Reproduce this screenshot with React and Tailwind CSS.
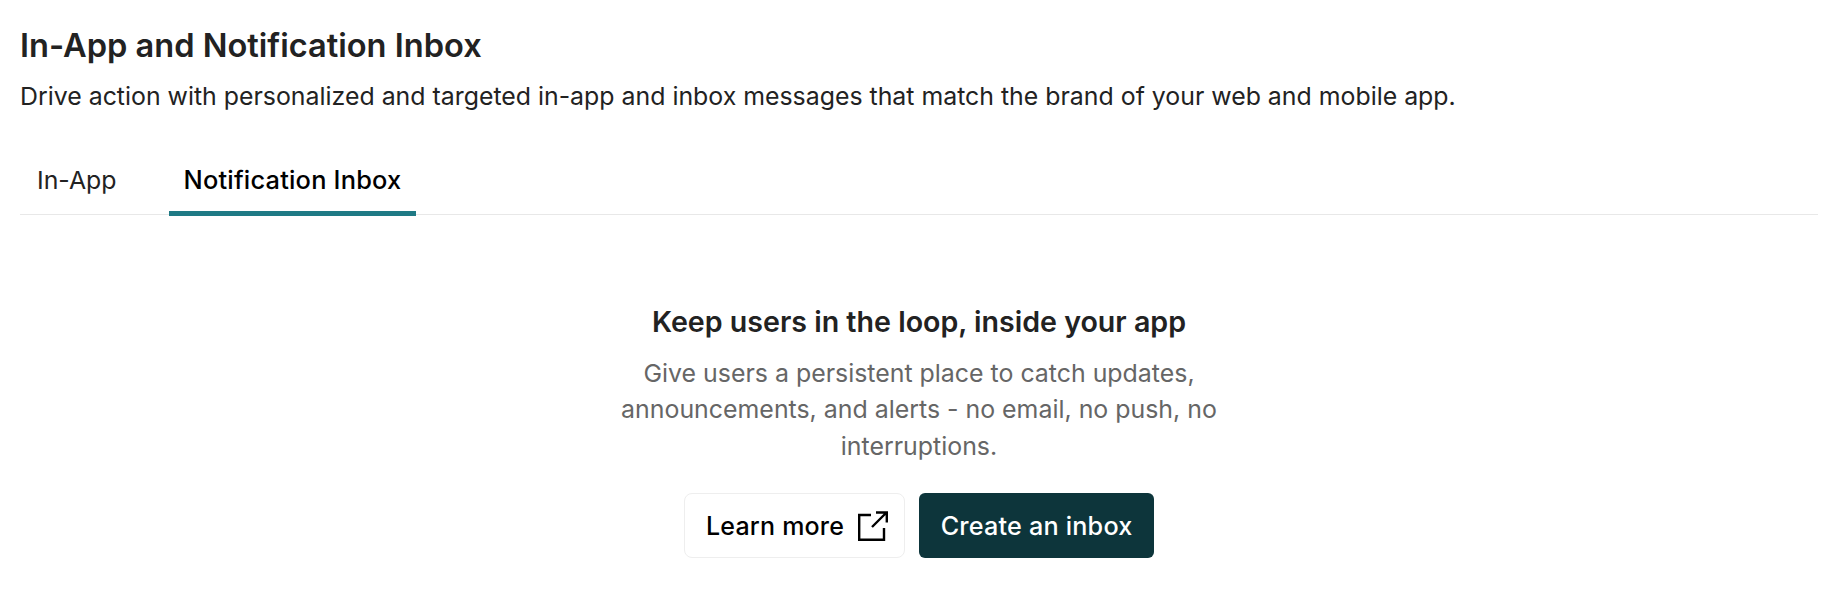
export default function App() {
  return (
    <div className="w-[1842px] h-[606px] bg-white overflow-hidden font-['Inter',sans-serif] text-[#222222] pl-5 pr-[24px] pt-[25px]">
      <h1 className="text-[32.6px] leading-[40px] font-semibold">In-App and Notification Inbox</h1>
      <p className="mt-[11px] text-[24.87px] leading-[40px]">Drive action with personalized and targeted in-app and inbox messages that match the brand of your web and mobile app.</p>
      <div className="mt-[34px] flex gap-[37px] border-b border-[#e8e8e8] h-[65px]">
        <button className="pl-[17px] pr-[15px] pb-[4px] h-[65px] text-[24.87px] text-[#222222]">In-App</button>
        <button className="px-[15px] h-[66px] text-[25.4px] font-medium tracking-[0.2px] text-black border-b-[5px] border-[#1f7a85]">Notification Inbox</button>
      </div>
      <div className="mt-[87px] flex flex-col items-center">
        <h2 className="text-[28.6px] leading-[40px] font-semibold">Keep users in the loop, inside your app</h2>
        <p className="mt-[13px] w-[620px] text-center text-[24.9px] leading-[36.4px] text-[#666666]">Give users a persistent place to catch updates, announcements, and alerts - no email, no push, no interruptions.</p>
        <div className="mt-[29px] flex gap-[14px]">
          <button className="h-[65px] pl-[21px] pr-[16px] pt-[2px] flex items-center gap-[14px] bg-white border border-[#eeeeee] rounded-[8px] text-[25px] font-medium tracking-[0.2px] text-black">
            Learn more
            <svg className="-mt-[2px]" width="30" height="30" viewBox="0 0 30 30" fill="none" stroke="#000" strokeWidth="2.4"><path d="M13 4H1.2v24.8H26V17M14 16 28.5 1.5M18 1.5h10.8v10"/></svg>
          </button>
          <button className="h-[65px] px-[21.5px] pt-[2px] bg-[#0d353b] rounded-[6px] text-[25.2px] font-medium tracking-[0.2px] text-white">Create an inbox</button>
        </div>
      </div>
    </div>
  );
}
